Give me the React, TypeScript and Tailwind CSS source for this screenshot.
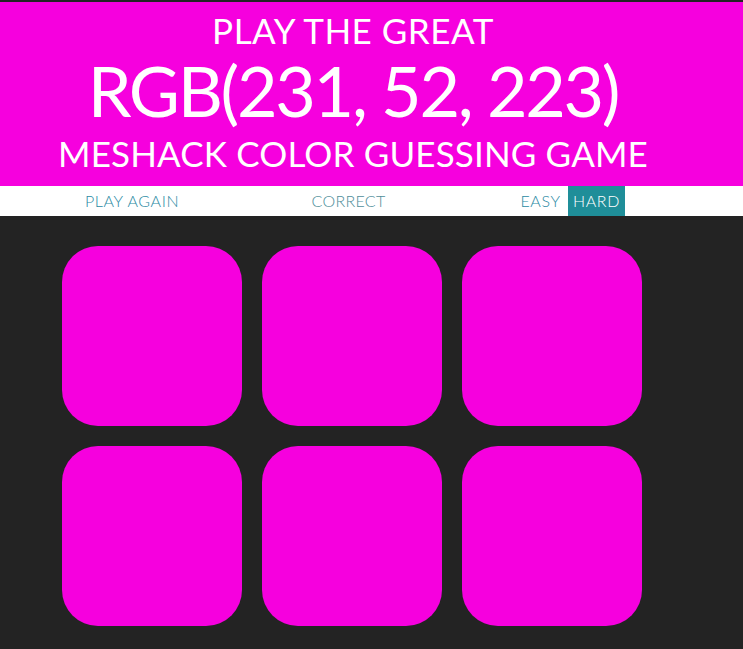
import React from "react";

const PINK = "bg-[#f600de]";

export default function App() {
  const squares = [0, 1, 2, 3, 4, 5];
  return (
    <div className="min-h-[649px] bg-[#232323] pt-[2px] font-['Lato',sans-serif]">
      <header className={`${PINK} text-white uppercase font-normal`}>
        <div className="w-[706px] text-center">
          <div className="text-[35px] leading-[57px] tracking-[0.5px]">Play the great</div>
          <div className="text-[70px] leading-[62px] tracking-[-2.3px]">RGB(231, 52, 223)</div>
          <div className="text-[35px] leading-[65px] tracking-[0.15px]">Meshack color guessing game</div>
        </div>
      </header>
      <nav className="bg-white h-[30px]">
        <div className="flex h-full w-[706px] text-[16px] font-light uppercase text-[#2a8aa3]">
          <div className="w-[80px]" />
          <button className="w-[104px] h-full flex items-center justify-center uppercase tracking-[0.6px]">Play again</button>
          <span className="w-[329px] h-full flex items-center justify-center text-[#4f8e9a] tracking-[0.3px]">Correct</span>
          <button className="w-[55px] h-full flex items-center justify-center uppercase tracking-[0.6px]">Easy</button>
          <button className="w-[57px] h-full flex items-center justify-center uppercase bg-[#1f8e99] text-white tracking-[0.6px]">Hard</button>
        </div>
      </nav>
      <main>
        <div className="w-[600px] ml-[52px] mt-[20px] flex flex-wrap">
          {squares.map((i) => (
            <div key={i} className={`w-[180px] h-[180px] m-[10px] rounded-[36px] ${PINK}`} />
          ))}
        </div>
      </main>
    </div>
  );
}
